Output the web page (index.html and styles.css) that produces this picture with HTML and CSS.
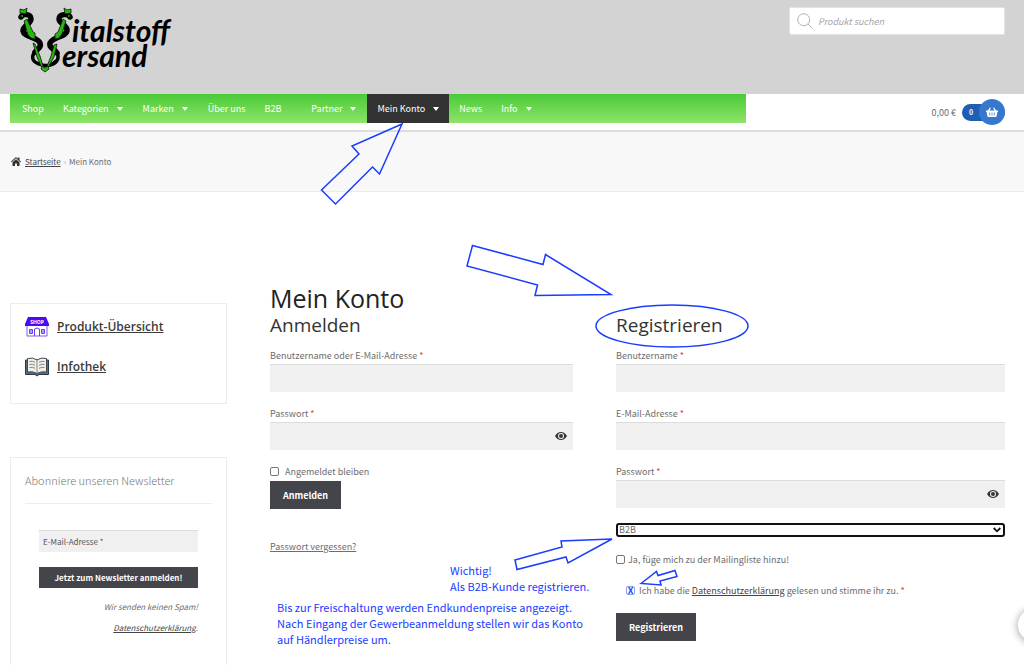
FILE: index.html
```html
<!DOCTYPE html>
<html lang="de">
<head>
<meta charset="utf-8">
<meta name="viewport" content="width=device-width, initial-scale=1">
<title>Mein Konto – Vitalstoff Versand</title>
<link rel="stylesheet" href="styles.css">
</head>
<body>
<header class="top">
  <a class="logo" href="#" aria-label="Vitalstoff Versand">
    <svg width="170" height="76" viewBox="10 0 170 76">
      <g fill="none" stroke="#000" stroke-linecap="round">
        <path stroke-width="5.500" d="M21 17c2-4 10-3 10 2 0 5-8 6-8 12 1 6 15 6 17 12 2 5-3 6-5 9"/>
        <path stroke-width="3.500" d="M34 53c-3 5-1 9 5 11 7 3 14 1 17-3"/>
        <path stroke-width="5.500" d="M70 17c-2-4-11-3-11 2 0 5 9 6 8 12-1 6-13 5-17 12-2 5 5 6 7 10"/>
        <path stroke-width="3.500" d="M57 53c3 6-1 11-7 12"/>
      </g>
      <g fill="#28b60e" stroke="#111" stroke-width=".8" stroke-linejoin="round">
        <path d="M24 21l3-2 6 13 2 1v6l-4-1-3-3zM33 43l2 1 5 12 4 13-3-3-4-9z"/>
        <path d="M66 21l-3-2-5 13-3 2v5l4-1 3-4zM57 44l-3 1-3 11-5 13 3-3 5-9z"/>
        <path d="M20 9l4 1 3-2-1 6-6-1zM71 9l-4 1-3-2 1 6 6-1z"/>
        <path d="M42 66l-1 3 4 3 4-3-1-3-3 2z"/>
      </g>
      <path fill="#28b60e" d="M20 16l3-1v2zM71 16l-3-1v2z"/>
      <text class="logo-text" x="72" y="42">italstoff</text>
      <text class="logo-text" x="62" y="67">ersand</text>
    </svg>
  </a>
  <form class="search">
    <svg width="16" height="16" viewBox="0 0 16 16" fill="none" stroke="#b3b3b3" stroke-width="1"><circle cx="6.700" cy="6.700" r="6"/><path d="M11 11l4.500 4.500"/></svg>
    <input type="search" placeholder="Produkt suchen" aria-label="Produkt suchen">
  </form>
</header>

<div class="navrow">
  <nav class="nav">
    <a href="#">Shop</a>
    <a class="drop" href="#">Kategorien</a>
    <a class="drop" href="#">Marken</a>
    <a href="#">Über uns</a>
    <a class="wide" href="#">B2B</a>
    <a class="drop" href="#">Partner</a>
    <a class="drop active" href="#">Mein Konto</a>
    <a href="#">News</a>
    <a class="drop" href="#">Info</a>
  </nav>
  <a class="cart" href="#">
    <span>0,00 €</span>
    <span class="pill"><b class="count">0</b><span class="disc"><svg width="12" height="10" viewBox="0 0 12 10"><path fill="#fff" d="M0 3.500h1.800L4 .4l1 .6-1.600 2.500h5.200L7 1l1-.6 2.200 3.100H12V5h-.6l-.8 4.200q-.1.800-.9.800H2.300q-.8 0-.9-.8L.6 5H0z"/><path stroke="#3778cf" stroke-width=".8" d="M3.700 5.500v3M6 5.500v3M8.300 5.500v3"/></svg></span></span>
  </a>
</div>

<div class="crumbs">
  <svg width="10" height="9" viewBox="0 0 20 18" fill="#333"><path d="M10 0l4 3.600V1h3v5.300L20 9l-1.300 1.400L10 2.700l-8.700 7.700L0 9z"/><path d="M10 4.300l7 6.200V18h-5v-5H8v5H3v-7.500z"/></svg>
  <a href="#">Startseite</a><span class="sep">›</span><span>Mein Konto</span>
</div>

<div class="page">
  <aside class="side">
    <section class="box links">
      <a href="#">
        <svg width="24" height="20" viewBox="0 0 24 20"><path fill="#fff" stroke="#8257f2" d="M2 8h20v11H2z"/><path fill="#4b09f5" d="M3 0h18l3 7v2H0V7z"/><path fill="none" stroke="#6a3bf3" d="M4.500 12.500h3v4h-3zM16.500 12.500h3v4h-3zM6 12v5M18 12v5M9.500 19v-7q2.500-2 5 0v7"/><text class="shop-sign" x="12" y="6.500" text-anchor="middle">SHOP</text></svg>
        <span>Produkt-Übersicht</span>
      </a>
      <a href="#">
        <svg width="24" height="20" viewBox="0 0 24 20"><path fill="#536f80" stroke="#28384a" d="M.5 3v14.500h9.500l2 1.500 2-1.500h9.500V3z"/><path fill="#f3efe9" stroke="#414650" d="M2.500 1.500Q8 0 12 3q4-3 9.500-1.500V15Q16 14 12 16.500 8 14 2.500 15z"/><path fill="none" stroke="#777" stroke-width=".9" d="M12 3v13M4.500 4.500q3-.8 5.500.8M4.500 7.500q3-.8 5.500.8M4.500 10.500q3-.8 5.500.8M14 5.300q3-1.600 5.500-.8M14 8.300q3-1.600 5.500-.8M14 11.300q3-1.600 5.500-.8"/></svg>
        <span>Infothek</span>
      </a>
    </section>
    <section class="box news">
      <h2>Abonniere unseren Newsletter</h2>
      <form class="news-form">
        <input type="email" placeholder="E-Mail-Adresse *" aria-label="E-Mail-Adresse">
        <button type="button" class="btn">Jetzt zum Newsletter anmelden!</button>
        <p>Wir senden keinen Spam!</p>
        <p><a href="#">Datenschutzerklärung</a>.</p>
      </form>
    </section>
  </aside>

  <main class="main">
    <h1>Mein Konto</h1>
    <div class="cols">
      <form class="col">
        <h2>Anmelden</h2>
        <div class="field">
          <label for="lu">Benutzername oder E-Mail-Adresse <i>*</i></label>
          <input id="lu" type="text">
        </div>
        <div class="field">
          <label for="lp">Passwort <i>*</i></label>
          <div class="pw"><input id="lp" type="password"><button type="button" class="eye" aria-label="Passwort anzeigen"><svg width="12" height="8" viewBox="0 0 12 8"><path fill="#333840" fill-rule="evenodd" d="M0 4q2.300-4 6-4t6 4q-2.300 4-6 4T0 4zM6 1a3 3 0 1 0 0 6 3 3 0 0 0 0-6z"/><circle cx="6" cy="4" r="2" fill="#333840"/></svg></button></div>
        </div>
        <label class="check remember"><input type="checkbox"> <span>Angemeldet bleiben</span></label>
        <button type="button" class="btn big">Anmelden</button>
        <a class="lost" href="#">Passwort vergessen?</a>
      </form>

      <form class="col">
        <h2>Registrieren</h2>
        <div class="field">
          <label for="ru">Benutzername <i>*</i></label>
          <input id="ru" type="text">
        </div>
        <div class="field">
          <label for="re">E-Mail-Adresse <i>*</i></label>
          <input id="re" type="email">
        </div>
        <div class="field">
          <label for="rp">Passwort <i>*</i></label>
          <div class="pw"><input id="rp" type="password"><button type="button" class="eye" aria-label="Passwort anzeigen"><svg width="12" height="8" viewBox="0 0 12 8"><path fill="#333840" fill-rule="evenodd" d="M0 4q2.300-4 6-4t6 4q-2.300 4-6 4T0 4zM6 1a3 3 0 1 0 0 6 3 3 0 0 0 0-6z"/><circle cx="6" cy="4" r="2" fill="#333840"/></svg></button></div>
        </div>
        <div class="select">
          <select aria-label="Kundentyp"><option>B2B</option><option>B2C</option></select>
          <svg width="8" height="6" viewBox="0 0 8 6" fill="none" stroke="#111" stroke-width="1.800"><path d="M.7 1L4 4.300 7.300 1"/></svg>
        </div>
        <label class="check mailing"><input type="checkbox"> <span>Ja, füge mich zu der Mailingliste hinzu!</span></label>
        <div class="check terms"><input id="terms" class="crossed" type="checkbox" checked> <label for="terms">Ich habe die <a href="#">Datenschutzerklärung</a> gelesen und stimme ihr zu. <i>*</i></label></div>
        <button type="button" class="btn big">Registrieren</button>
      </form>
    </div>
  </main>
</div>

<svg class="marks" width="1024" height="665" viewBox="0 0 1024 665" aria-hidden="true">
  <path d="M402 124l-50 22 7 8-37.500 36 14 14 37-37 7 7z"/>
  <path d="M472.500 245.500l70.500 19 2.500-10 65.500 40-76 1 2.500-10.500-70.500-19z"/>
  <path d="M515 560l47-13-1-6 51-2-44 24-2-6-49 12.500z"/>
  <path d="M641 583.500l15.500-12 1.500 4 17-5 2 6-17 4.500 1 4z"/>
  <ellipse cx="672" cy="326" rx="76" ry="21"/>
</svg>
<p class="note note-type">Wichtig!<br>Als B2B-Kunde registrieren.</p>
<p class="note note-price">Bis zur Freischaltung werden Endkundenpreise angezeigt.<br>Nach Eingang der Gewerbeanmeldung stellen wir das Konto<br>auf Händlerpreise um.</p>
<button type="button" class="chat" aria-label="Chat öffnen"></button>
</body>
</html>
```
FILE: styles.css
```css
* { box-sizing: border-box; }

body {
  margin: 0;
  min-height: 100vh;
  display: flex;
  flex-direction: column;
  position: relative;
  background: #fff;
  color: #6d6d6d;
  font: 9px/17px "Noto Sans CJK SC", "Noto Sans", sans-serif;
}

h1, h2, p { margin: 0; }
h1, h2 { font-weight: 400; }
a { color: #444; }
i { color: #e2401c; font-style: normal; }
svg { display: block; flex: none; }
input, button, select { font: inherit; color: inherit; margin: 0; border-radius: 0; }

.top {
  height: 94px;
  padding: 0 19px 0 10px;
  display: flex;
  justify-content: space-between;
  align-items: flex-start;
  background: #d3d3d3;
}
.logo-text { font: italic 700 30px "Lato", sans-serif; fill: #000; }
.search {
  margin-top: 7px;
  width: 216px;
  height: 28px;
  padding: 0 7px;
  display: flex;
  align-items: center;
  gap: 5px;
  background: #fff;
  border: 1px solid #e4e4e4;
  border-radius: 2px;
}
.search input {
  flex: 1;
  min-width: 0;
  border: 0;
  padding: 0;
  outline: 0;
  background: none;
  font-style: italic;
}
.search input::placeholder { color: #a5a5a5; }

.navrow {
  height: 38px;
  padding: 0 19px 0 10px;
  display: flex;
  justify-content: space-between;
  border-bottom: 2px solid #dcdcdc;
}
.nav {
  width: 74%;
  height: 29px;
  padding-left: 3px;
  display: flex;
  gap: 1px;
  background: linear-gradient(#4aca38, #8ee468);
}
.nav a {
  padding: 0 9px;
  display: flex;
  align-items: center;
  color: #fff;
  text-decoration: none;
  white-space: nowrap;
}
.nav .drop { padding-right: 10px; }
.nav .drop::after {
  content: "";
  margin-left: 8px;
  border: 3px solid transparent;
  border-top: 4px solid #fff;
  border-bottom: 0;
}
.nav .wide { padding-right: 20px; }
.nav .active { padding-left: 10px; background: #333; }
.cart {
  margin-top: 5px;
  height: 26px;
  display: flex;
  align-items: center;
  gap: 6px;
  color: #6d6d6d;
  text-decoration: none;
}
.pill {
  width: 43px;
  height: 17px;
  padding-left: 7px;
  display: flex;
  align-items: center;
  justify-content: space-between;
  border-radius: 9px;
  background: #1f5fb3;
}
.count { color: #fff; font-size: 7px; }
.disc {
  width: 26px;
  height: 26px;
  display: grid;
  place-items: center;
  border-radius: 50%;
  background: #3778cf;
}

.crumbs {
  height: 60px;
  padding: 0 11px;
  display: flex;
  align-items: center;
  background: #f8f8f8;
  border-bottom: 1px solid #ececec;
  font-size: 8px;
}
.crumbs a { margin-left: 4px; }
.sep { margin: 0 3px; color: #aaa; }

.page {
  flex: 1;
  padding: 90px 19px 0 10px;
  display: grid;
  grid-template-columns: minmax(0, 217fr) minmax(0, 735fr);
  column-gap: 43px;
}
.side {
  padding-top: 21px;
  display: flex;
  flex-direction: column;
}
.box { border: 1px solid #ececec; }
.links {
  padding: 13px 14px 26px;
  display: grid;
  gap: 20px;
}
.links a {
  display: flex;
  align-items: center;
  gap: 8px;
  color: #3c3c3c;
  font: 600 12px/20px "Open Sans", sans-serif;
}
.shop-sign { font: 700 5px "Open Sans", sans-serif; fill: #fff; }
.news {
  flex: 1;
  margin-top: 53px;
  padding: 12px 14px 0;
  border-bottom: 0;
}
.news h2 {
  padding-bottom: 12px;
  border-bottom: 1px solid #ececec;
  font-size: 11px;
  line-height: 21px;
  font-weight: 300;
  color: #777;
}
.news-form {
  padding: 26px 14px 0;
  display: flex;
  flex-direction: column;
  font-size: 8px;
}
.news-form input {
  width: 100%;
  height: 22px;
  padding: 0 4px;
}
.news-form .btn { height: 21px; margin: 15px 0 10px; }
.news-form p { margin-bottom: 4px; text-align: right; font-style: italic; }

.field input, .news-form input {
  border: 0;
  border-top: 1px solid #dcdcdc;
  background: #f0f0f0;
}
.news-form input::placeholder { color: #555; }

.btn {
  border: 0;
  padding: 0 13px;
  background: #43454b;
  color: #fff;
  font-weight: 700;
}
.big { height: 28px; }

.main h1 { color: #222; font: 400 25px/32px "Open Sans", sans-serif; }
.cols {
  display: grid;
  grid-template-columns: minmax(0, 303fr) minmax(0, 389fr);
  column-gap: 43px;
}
.col { display: flex; flex-direction: column; align-items: flex-start; }
.col h2 {
  margin-bottom: 11px;
  color: #333;
  font: 400 19px/22px "Open Sans", sans-serif;
}
.field { width: 100%; margin-bottom: 13px; }
.field label { display: block; }
.field input { display: block; width: 100%; height: 28px; padding: 0 8px; }
.pw { position: relative; }
.eye {
  position: absolute;
  right: 6px;
  top: 10px;
  padding: 0;
  border: 0;
  background: none;
}
.check { display: flex; align-items: center; }
.check input {
  appearance: none;
  flex: none;
  width: 9px;
  height: 9px;
  border: 1px solid #777;
  border-radius: 2px;
  background: #fff;
}
.remember { gap: 6px; margin-bottom: 1px; }
.lost { margin-top: 29px; color: #6d6d6d; }
.select { position: relative; width: 100%; margin-top: 2px; }
.select select {
  appearance: none;
  display: block;
  width: 100%;
  height: 14px;
  padding: 0 1px;
  border: 2px solid #111;
  border-radius: 3px;
  background: #fff;
  line-height: 10px;
}
.select svg { position: absolute; right: 4px; top: 4px; pointer-events: none; }
.mailing { gap: 3px; margin-top: 14px; }
.terms { gap: 4px; margin: 14px 0 14px 10px; }
.check .crossed {
  display: grid;
  place-items: center;
  border-color: #8ea0e8;
}
.crossed::before { content: "X"; color: #1a3cff; font-weight: 700; line-height: 8px; }

.marks {
  position: absolute;
  left: 0;
  top: 0;
  pointer-events: none;
  fill: none;
  stroke: #1a3cff;
  stroke-width: 1.500;
}
.note {
  position: absolute;
  color: #1a3cff;
  font-size: 11px;
  line-height: 16px;
  white-space: nowrap;
}
.note-type { left: 450px; top: 562px; }
.note-price { left: 277px; top: 599px; }

.chat {
  position: fixed;
  right: -28px;
  top: 608px;
  width: 34px;
  height: 34px;
  padding: 0;
  border: 0;
  border-radius: 50%;
  background: #fff;
  box-shadow: 0 1px 8px rgba(0, 0, 0, .4);
}
```
